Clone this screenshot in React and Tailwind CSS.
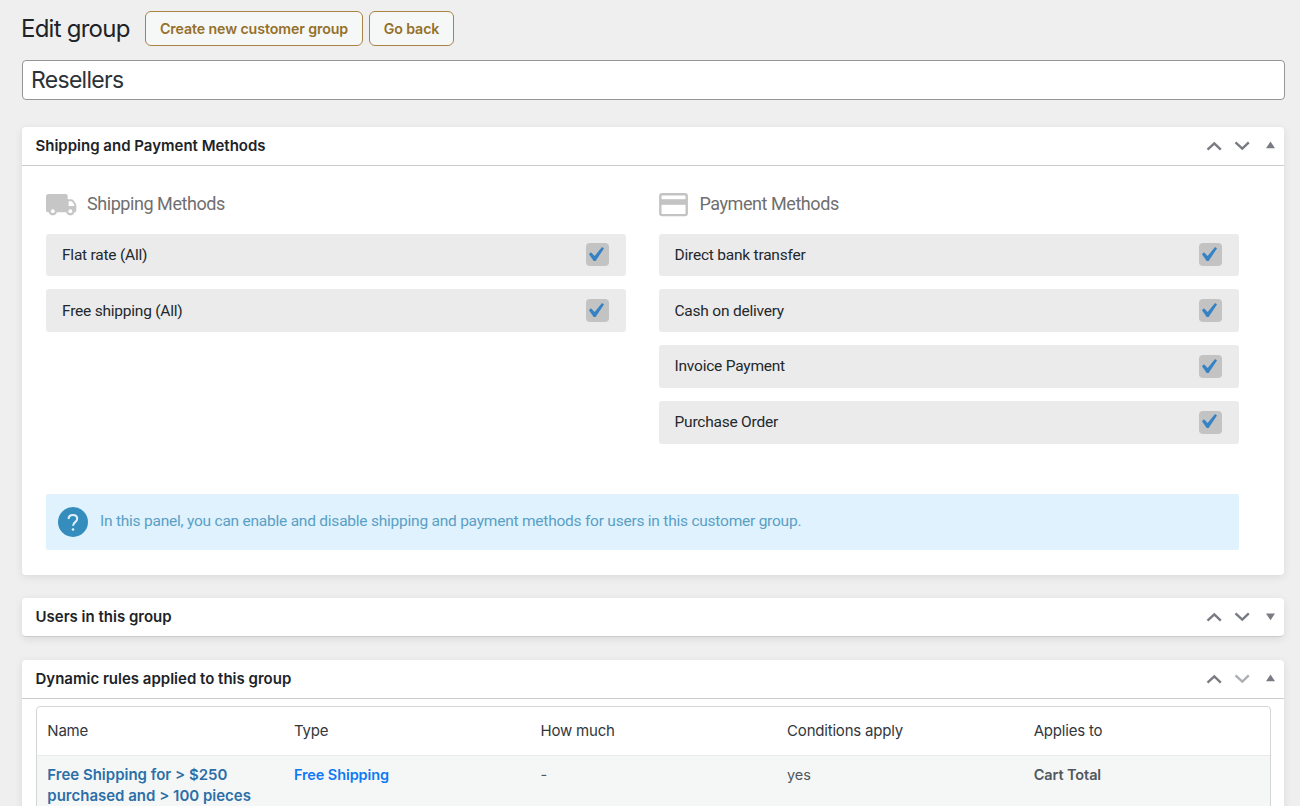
import React from 'react';
import clsx from 'clsx';

const shippingMethods = ['Flat rate (All)', 'Free shipping (All)'];
const paymentMethods = ['Direct bank transfer', 'Cash on delivery', 'Invoice Payment', 'Purchase Order'];
const columns = ['Name', 'Type', 'How much', 'Conditions apply', 'Applies to'];

const TruckIcon = () => (
    <svg width="31" height="22" viewBox="0 0 31 22" className="shrink-0">
        <path
            fill="#c6c6c6"
            d="M2.5 0h17.2a2 2 0 0 1 2 2v3.2h3.4c1 0 1.9.4 2.5 1.2l2 2.9c.4.6.7 1.3.7 2v5.5c0 .9-.6 1.5-1.5 1.5H2a2 2 0 0 1-2-2V2.5A2.5 2.5 0 0 1 2.5 0z"
        />
        <path fill="#fff" d="M22.6 7.3h2.6c.5 0 .9.2 1.2.6l1.8 2.7v1.3h-5.6z" />
        <circle cx="6.8" cy="17.3" r="4.1" fill="#c6c6c6" />
        <circle cx="24.3" cy="17.3" r="4.1" fill="#c6c6c6" />
        <circle cx="6.8" cy="17.2" r="1.9" fill="#fff" />
        <circle cx="24.3" cy="17.2" r="1.9" fill="#fff" />
    </svg>
);

const CardIcon = () => (
    <svg width="30" height="24" viewBox="0 0 30 24" className="shrink-0">
        <rect x="1.3" y="1.3" width="26.4" height="20.8" rx="1.8" fill="#fff" stroke="#c3c3c3" strokeWidth="2.4" />
        <path fill="#c3c3c3" d="M1.2 6.2h26.5v5.6H1.2z" />
    </svg>
);

const Checkbox = () => (
    <span className="flex h-[23px] w-[23px] items-center justify-center rounded-[4px] bg-[#c3c3c3] pr-[2px] pb-[2px]">
        <svg width="15" height="14" viewBox="5.78 4.89 10.39 9.32" preserveAspectRatio="none">
            <path fill="#3582c4" d="M14.83 4.89l1.34.94-5.81 8.38H9.02L5.78 9.67l1.34-1.25 2.57 2.4z" />
        </svg>
    </span>
);

const Chevron = ({ down, muted }) => (
    <svg width="16" height="10" viewBox="0 0 16 10" className={clsx(muted && 'opacity-60')}>
        <path d={down ? 'M1.5 1.4L8.3 7.7l6.5-6.3' : 'M1.5 8.6L8.3 2.3l6.5 6.3'} fill="none" stroke="#787c82" strokeWidth="2.4" />
    </svg>
);

const Panel = ({ title, open, last, children }) => (
    <section className="rounded-[4px] bg-white shadow-[0_2px_8px_rgba(0,0,0,0.09)]">
        <header
            className={clsx(
                'flex h-[39px] items-center justify-between border-b border-[#c9cbcd] pr-[9px] pl-[13.5px]',
                !open && 'rounded-[4px]'
            )}
        >
            <h2 className="pt-px text-[15px] font-semibold text-[#1d2327]">{title}</h2>
            <div className="flex items-center">
                <Chevron />
                <span className="ml-3 flex">
                    <Chevron down muted={last} />
                </span>
                <svg width="9" height="9" viewBox="0 0 9 9" className="ml-4">
                    <path d={open ? 'M4.5 .5L9 7.3H0z' : 'M0 1.5h9L4.5 8.3z'} fill="#787c82" />
                </svg>
            </div>
        </header>
        {children}
    </section>
);

const MethodList = ({ icon, title, methods }) => (
    <div className="w-[580px]">
        <div className="mb-[18px] flex h-6 items-center">
            <span className="flex w-[41px] pt-[2px]">{icon}</span>
            <h3 className="text-[18px]/[22px] tracking-[-0.44px] text-[#6f6f6f]">{title}</h3>
        </div>
        <ul className="flex flex-col gap-[13px]">
            {methods.map((method) => (
                <li
                    key={method}
                    className="flex h-[42.8px] items-center justify-between rounded-[3px] bg-[#ebebeb] pr-[17px] pl-4 text-[15.5px] tracking-[-0.22px] text-[#23282d]"
                >
                    <span className="pt-px">{method}</span>
                    <Checkbox />
                </li>
            ))}
        </ul>
    </div>
);

const App = () => {
    return (
        <div className="h-[806px] overflow-hidden bg-[#efefef] pr-4 pl-[22px] font-['Inter',sans-serif]">
            <div className="flex items-center pt-[11px]">
                <h1 className="-ml-px w-[124px] text-[24px] leading-[35px] tracking-[-0.76px] whitespace-nowrap text-[#1d2327]">Edit group</h1>
                <button className="h-[35px] w-[218px] rounded-[6px] border border-[#a88444] bg-[#f6f7f7] text-[14.2px] font-semibold tracking-[-0.1px] whitespace-nowrap text-[#94702a]">
                    Create new customer group
                </button>
                <button className="ml-[6px] h-[35px] w-[85px] rounded-[6px] border border-[#a88444] bg-[#f6f7f7] text-[14.2px] font-semibold tracking-[-0.1px] whitespace-nowrap text-[#94702a]">
                    Go back
                </button>
            </div>

            <input
                type="text"
                defaultValue="Resellers"
                className="mt-[14px] block h-10 w-[1263px] rounded-[4px] border border-[#949699] bg-white px-[8px] text-[23px] tracking-[-0.7px] text-[#2c3338] outline-none"
            />

            <div className="mt-[26.6px] flex w-[1262px] flex-col gap-[22.8px]">
                <Panel title="Shipping and Payment Methods" open>
                    <div className="h-[409.4px] px-6 pt-[26px] font-['Roboto',sans-serif]">
                        <div className="flex h-[302px] gap-[32.5px]">
                            <MethodList icon={<TruckIcon />} title="Shipping Methods" methods={shippingMethods} />
                            <MethodList icon={<CardIcon />} title="Payment Methods" methods={paymentMethods} />
                        </div>
                        <div className="flex h-14 w-[1193px] items-center rounded-[2px] bg-[#dff2fe] pl-3 text-[15.5px] tracking-[-0.23px] text-[#5a9fc5]">
                            <svg width="30" height="30" viewBox="0 0 30 30" className="mr-3">
                                <circle cx="15" cy="15" r="15" fill="#358dbd" />
                                <path d="M10.6 11.9c0-2.5 1.9-4 4.3-4s4.3 1.5 4.3 3.9c0 3.2-4.2 3.5-4.2 7" fill="none" stroke="#dff2fe" strokeWidth="2" />
                                <circle cx="15" cy="22.5" r="1.3" fill="#dff2fe" />
                            </svg>
                            <p className="pt-px">In this panel, you can enable and disable shipping and payment methods for users in this customer group.</p>
                        </div>
                    </div>
                </Panel>

                <Panel title="Users in this group" />

                <Panel title="Dynamic rules applied to this group" open last>
                    <div className="px-[13.5px] pt-[7px]">
                        <table className="w-[1235px] table-fixed border-separate border-spacing-0 rounded-t-[4px] border border-[#d3d5d8] text-left text-[15px] tracking-[-0.2px]">
                            <thead>
                                <tr className="h-[49px]">
                                    {columns.map((column) => (
                                        <th key={column} className="border-b border-[#e9eaea] px-[10.8px] pt-[2px] font-normal text-[#32373c]">
                                            {column}
                                        </th>
                                    ))}
                                </tr>
                            </thead>
                            <tbody>
                                <tr className="h-[80px] bg-[#f5f7f7] align-top text-[14.5px] leading-[21px] tracking-[-0.1px] text-[#50575e]">
                                    <td className="px-[10.8px] pt-[8.5px] text-[15px] font-semibold tracking-normal text-[#2c6fa8]">
                                        Free Shipping for &gt; $250
                                        <br />
                                        purchased and &gt; 100 pieces
                                    </td>
                                    <td className="px-[10.8px] pt-[8.5px] font-semibold text-[#0d7af5]">Free Shipping</td>
                                    <td className="px-[10.8px] pt-[8.5px]">-</td>
                                    <td className="px-[10.8px] pt-[8.5px]">yes</td>
                                    <td className="px-[10.8px] pt-[8.5px] font-semibold">Cart Total</td>
                                </tr>
                            </tbody>
                        </table>
                    </div>
                </Panel>
            </div>
        </div>
    );
};

export default App;
